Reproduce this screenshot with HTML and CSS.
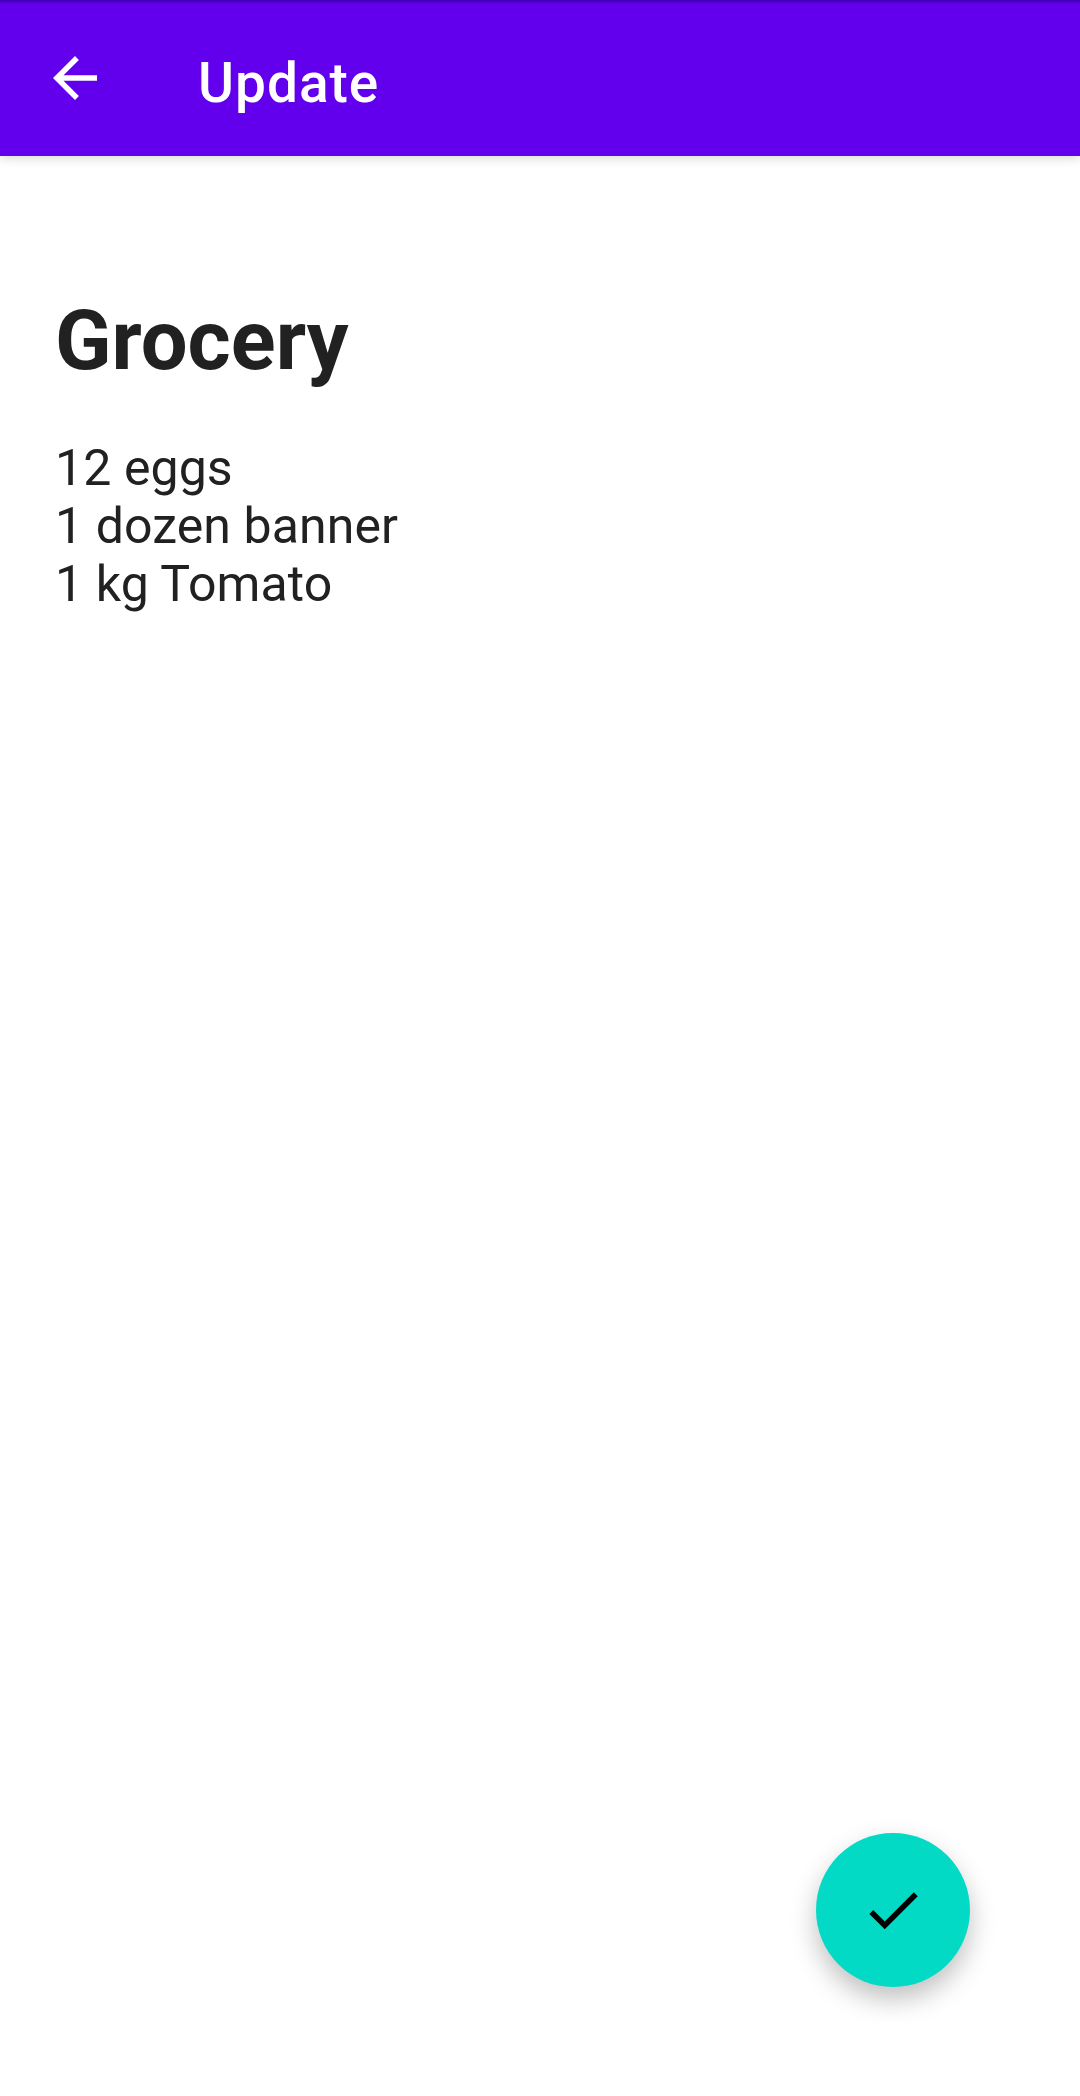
FILE: index.html
```html
<!DOCTYPE html>
<html lang="en">
<head>
<meta charset="utf-8">
<title>Update</title>
<link rel="stylesheet" href="styles.css">
</head>
<body>
<header class="bar">
<button class="back" aria-label="Back"><svg viewBox="0 0 24 24"><path d="M20 11H7.83l5.59-5.59L12 4l-8 8 8 8 1.41-1.41L7.83 13H20v-2z"/></svg></button>
<h1 class="title">Update</h1>
</header>
<main class="note">
<h2 class="name">Grocery</h2>
<p class="text">12 eggs<br>1 dozen banner<br>1 kg Tomato</p>
</main>
<footer class="actions">
<button class="fab" aria-label="Save"><svg viewBox="0 0 24 24"><path d="M9 16.17L4.83 12l-1.42 1.41L9 19 21 7l-1.41-1.41z"/></svg></button>
</footer>
</body>
</html>
```
FILE: styles.css
```css
* { box-sizing: border-box; }
body { margin: 0; height: 2096px; display: flex; flex-direction: column; background: #fff; color: #212121; font-family: Roboto, sans-serif; }
button { border: 0; padding: 0; background: none; display: block; }
svg { display: block; }
.bar { height: 156px; flex: none; display: flex; background: linear-gradient(#3c00b0, #5000cc 2px, #6200ee 4px); box-shadow: 0 2px 10px rgba(0,0,0,.16); color: #fff; }
.back { width: 66px; height: 66px; margin: 45px 0 0 42px; }
.back svg { width: 66px; height: 66px; fill: #fff; }
.title { margin: 50px 0 0 90px; font-size: 55px; line-height: 66px; font-weight: 500; letter-spacing: 1px; }
.note { flex: 1; padding: 145px 55px 0; }
.name { margin: 0; font-size: 83px; line-height: 80px; font-weight: 700; }
.text { margin: 58px 0 0; font-size: 50px; line-height: 58px; letter-spacing: .1px; }
.actions { display: flex; justify-content: flex-end; padding: 0 110px 109.5px 0; }
.fab { width: 154px; height: 154px; border-radius: 50%; background: #03dac5; display: flex; align-items: center; justify-content: center; box-shadow: 0 12px 26px rgba(0,0,0,.25); }
.fab svg { width: 66px; height: 66px; }
```
